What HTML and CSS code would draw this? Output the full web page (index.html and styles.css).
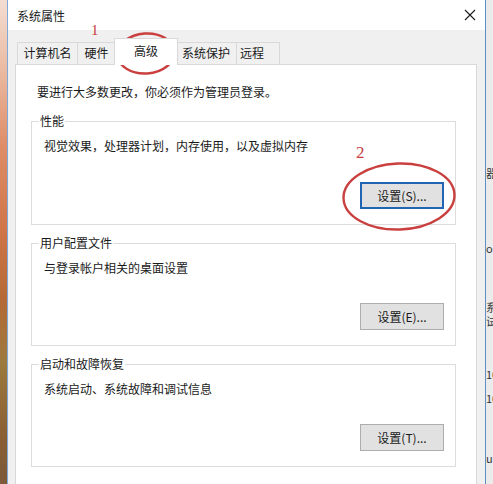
FILE: index.html
```html
<!DOCTYPE html>
<html lang="zh-CN">
<head>
<meta charset="utf-8">
<title>系统属性</title>
<link rel="stylesheet" href="styles.css">
</head>
<body>
<div class="screen">
  <div class="bg-left"></div>
  <div class="window">
    <div class="titlebar">
      <span class="title">系统属性</span>
      <svg class="close" width="12" height="12" viewBox="0 0 12 12"><path d="M1 1L11 11M11 1L1 11" stroke="#1a1a1a" stroke-width="1.1" fill="none"/></svg>
    </div>
    <div class="client">
      <div class="tabs">
        <div class="tab t1">计算机名</div>
        <div class="tab t2">硬件</div>
        <div class="tab t3 selected">高级</div>
        <div class="tab t4">系统保护</div>
        <div class="tab t5">远程</div>
      </div>
      <div class="panel">
        <p class="intro">要进行大多数更改，你必须作为管理员登录。</p>
        <fieldset class="group first">
          <legend>性能</legend>
          <p class="desc">视觉效果，处理器计划，内存使用，以及虚拟内存</p>
          <div class="actions"><button class="btn focused">设置(S)...</button></div>
        </fieldset>
        <fieldset class="group">
          <legend>用户配置文件</legend>
          <p class="desc">与登录帐户相关的桌面设置</p>
          <div class="actions"><button class="btn">设置(E)...</button></div>
        </fieldset>
        <fieldset class="group">
          <legend>启动和故障恢复</legend>
          <p class="desc">系统启动、系统故障和调试信息</p>
          <div class="actions"><button class="btn">设置(T)...</button></div>
        </fieldset>
      </div>
    </div>
  </div>
  <div class="bg-right">
    <span class="frag f1">器</span>
    <span class="frag f2">or</span>
    <span class="frag f3">系</span>
    <span class="frag f4">试</span>
    <span class="frag f5">10</span>
    <span class="frag f6">10</span>
    <span class="frag f7">up</span>
  </div>
  <svg class="marks" width="493" height="484" viewBox="0 0 493 484">
    <ellipse cx="146" cy="53.5" rx="28.5" ry="20" fill="none" stroke="#c9403f" stroke-width="2.4" transform="rotate(-4 146 53.5)"/>
    <ellipse cx="399" cy="196.5" rx="55.5" ry="33" fill="none" stroke="#c9403f" stroke-width="2.4" transform="rotate(-2 399 196.5)"/>
    <text x="91" y="35" class="num n1">1</text>
    <text x="356" y="158" class="num n2">2</text>
  </svg>
</div>
</body>
</html>
```
FILE: styles.css
```css
html, body {
  margin: 0;
  padding: 0;
}
body {
  font-family: "Noto Sans CJK SC", "Noto Sans", sans-serif;
  font-size: 12px;
  color: #1a1a1a;
  background: #f0f0f0;
}
.screen {
  position: relative;
  display: flex;
  width: 493px;
  height: 484px;
  overflow: hidden;
}
.bg-left {
  width: 7px;
  flex: none;
  background: linear-gradient(180deg, #f3ddd2 0%, #eab9a0 15%, #de8d68 30%, #cf7548 48%, #b46a36 62%, #9c7a3e 75%, #8a5f34 90%, #7d5a3a 100%);
}
.window {
  width: 479px;
  flex: none;
  box-sizing: border-box;
  border-left: 1px solid #7fa9d8;
  border-right: 1px solid #5f8fc0;
  background: #f0f0f0;
  display: flex;
  flex-direction: column;
}
.titlebar {
  height: 30px;
  flex: none;
  background: #ffffff;
  display: flex;
  align-items: center;
  justify-content: space-between;
  padding: 0 8px 0 9px;
}
.title {
  line-height: 16px;
  margin-top: 1px;
}
.close {
  display: block;
  margin-right: 1px;
}
.client {
  flex: 1;
  display: flex;
  flex-direction: column;
  padding: 8px 8px 0 7px;
  min-height: 0;
}
.tabs {
  height: 26px;
  flex: none;
  display: flex;
  align-items: flex-end;
  padding-left: 2px;
}
.tab {
  box-sizing: border-box;
  height: 22px;
  border: 1px solid #d9d9d9;
  border-bottom: none;
  background: #f0f0f0;
  text-align: center;
  line-height: 20px;
  margin-left: -1px;
  white-space: nowrap;
}
.t1 { width: 61px; margin-left: 0; }
.t2 { width: 39px; }
.t3 { width: 61px; }
.t4 { width: 62px; }
.t5 { width: 44px; text-align: left; padding-left: 3px; }
.tab.selected {
  position: relative;
  z-index: 1;
  width: 64px;
  height: 27px;
  margin: 0 -2px -1px -2px;
  background: #ffffff;
  line-height: 18px;
  padding-top: 3px;
}
.panel {
  flex: 1;
  min-height: 0;
  border: 1px solid #d9d9d9;
  border-bottom: none;
  background: #ffffff;
  padding: 19px 20px 0 15px;
  overflow: hidden;
}
.intro {
  margin: 0;
  padding-left: 6px;
  line-height: 16px;
}
.group {
  margin: 10px 0 0 0;
  padding: 9px 11px 15px 12px;
  border: 1px solid #dcdcdc;
  min-width: 0;
}
.group.first {
  margin-top: 13px;
}
.group legend {
  padding: 0 1px;
  margin-left: -5px;
  line-height: 16px;
}
.desc {
  margin: 0;
  line-height: 16px;
}
.actions {
  display: flex;
  justify-content: flex-end;
  margin-top: 27px;
}
.group.first .actions {
  margin-top: 28px;
}
.btn {
  box-sizing: border-box;
  width: 84px;
  height: 27px;
  border: 1px solid #adadad;
  background: #e1e1e1;
  font-family: "Noto Sans CJK SC", "Noto Sans", sans-serif;
  font-size: 12px;
  color: #1a1a1a;
  padding: 0;
  line-height: 16px;
}
.btn.focused {
  border: 2px solid #2266b3;
}
.bg-right {
  flex: 1;
  background: #ebebeb;
  display: flex;
  flex-direction: column;
  overflow: hidden;
  font-family: "Noto Sans CJK SC", sans-serif;
  font-size: 11px;
  line-height: 12px;
  color: #333;
}
.frag {
  display: block;
  white-space: nowrap;
}
.f1 { margin-top: 167px; }
.f2 { margin-top: 63px; }
.f3 { margin-top: 47px; }
.f4 { margin-top: 2px; }
.f5 { margin-top: 41px; }
.f6 { margin-top: 12px; }
.f7 { margin-top: 48px; }
.marks {
  position: absolute;
  left: 0;
  top: 0;
  pointer-events: none;
}
.num {
  font-family: "Liberation Serif", serif;
  fill: #c9403f;
}
.n1 { font-size: 15px; }
.n2 { font-size: 17px; }
```
